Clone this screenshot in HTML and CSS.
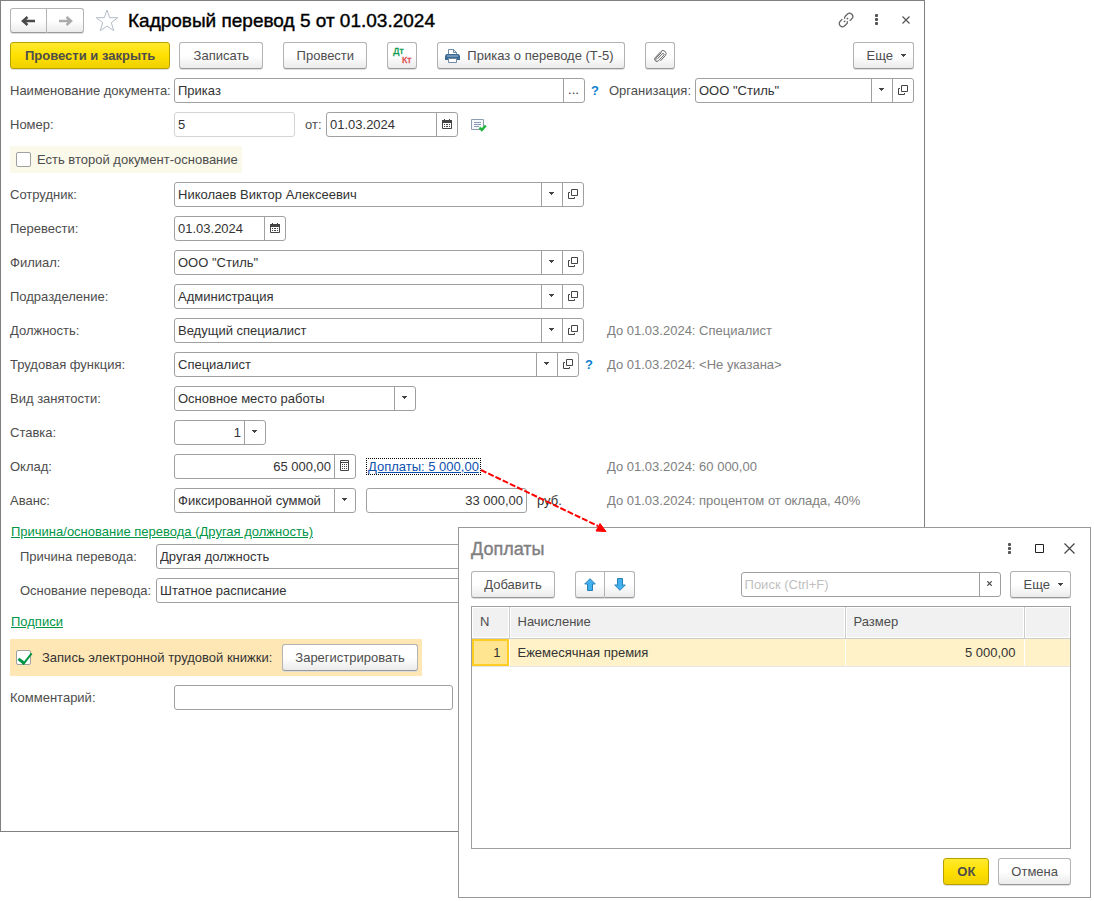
FILE: index.html
```html
<!DOCTYPE html>
<html lang="ru">
<head>
<meta charset="utf-8">
<title>Кадровый перевод 5 от 01.03.2024</title>
<link rel="stylesheet" href="styles.css">
</head>
<body>
<svg class="sprite" aria-hidden="true">
  <symbol id="i-open" viewBox="0 0 10 10"><path d="M3.5.5h6v6h-6zM2 3.500H.5v6h6V8" fill="none" stroke="#444"/></symbol>
  <symbol id="i-down" viewBox="0 0 5 3"><path d="M0 0h5v1H4v1H3v1H2V2H1V1H0z" fill="#444"/></symbol>
  <symbol id="i-cal" viewBox="0 0 10 10"><path d="M.5 2v7.500h9V2" fill="none" stroke="#444"/><path d="M0 1h2V0h1v1h4V0h1v1h2v3H0zM2 5h1v1H2zM4 5h2v1H4zM7 5h1v1H7zM2 7h1v1H2zM4 7h2v1H4zM7 7h1v1H7z" fill="#444"/></symbol>
  <symbol id="i-calc" viewBox="0 0 9 11"><path d="M.5.5h8v10h-8zM0 2.500h9" fill="none" stroke="#444"/><path d="M2 4h1v1H2zM4 4h1v1H4zM6 4h1v1H6zM2 6h1v1H2zM4 6h1v1H4zM6 6h1v1H6zM2 8h1v1H2zM4 8h1v1H4zM6 8h1v1H6z" fill="#444"/></symbol>
  <symbol id="i-dots" viewBox="0 0 3 11"><path d="M0 0h3v3H0zM0 4h3v3H0zM0 8h3v3H0z" fill="#777"/><path d="M1 0h1v3H1zM1 4h1v3H1zM1 8h1v3H1zM0 1h3v1H0zM0 5h3v1H0zM0 9h3v1H0z" fill="#555"/></symbol>
</svg>
<div class="scene">
  <main class="window">
    <header class="titlebar">
      <div class="btn-group">
        <button class="btn nav" aria-label="Назад"><svg width="15" height="12" viewBox="0 0 15 12"><path d="M14 6H3M6.500 2L2 6l4.500 4" fill="none" stroke="#4a4a4a" stroke-width="2.500"/></svg></button>
        <button class="btn nav" aria-label="Вперед"><svg width="15" height="12" viewBox="0 0 15 12"><path d="M1 6h11M8.500 2L13 6l-4.500 4" fill="none" stroke="#aaa" stroke-width="2.500"/></svg></button>
      </div>
      <button class="icon-btn star" aria-label="Избранное"><svg width="24" height="23" viewBox="0 0 24 23"><path d="M12 1l2.700 7.700h8.100l-6.500 5 2.400 8L12 17l-6.700 4.700 2.400-8-6.500-5h8.100z" fill="#fff" stroke="#b4bcc6"/></svg></button>
      <h1 class="title">Кадровый перевод 5 от 01.03.2024</h1>
      <div class="window-tools">
        <button class="icon-btn" aria-label="Ссылка"><svg width="16" height="16" viewBox="0 0 16 16"><g fill="none" stroke="#666" stroke-width="1.300" transform="rotate(-45 8 8)"><path d="M6 4.800H3a3.200 3.200 0 0 0 0 6.400h2.500q2 0 2.500-1.500M10 11.200h3a3.200 3.200 0 0 0 0-6.400h-2.500q-2 0-2.500 1.500M5 8h2M9 8h2"/></g></svg></button>
        <button class="icon-btn" aria-label="Меню"><svg width="3" height="11"><use href="#i-dots"/></svg></button>
        <button class="icon-btn" aria-label="Закрыть"><svg width="8" height="8" viewBox="0 0 8 8"><path d="M.5.5l7 7M7.500.5l-7 7" stroke="#555" stroke-width="1.200"/></svg></button>
      </div>
    </header>

    <div class="toolbar">
      <button class="btn primary submit">Провести и закрыть</button>
      <button class="btn std gap-s">Записать</button>
      <button class="btn std gap-l">Провести</button>
      <button class="btn square gap-l" aria-label="Дебет и кредит"><span class="dtkt"><span class="dt">Дт</span><span class="kt">Кт</span></span></button>
      <button class="btn print gap-l"><svg width="15" height="14" viewBox="0 0 15 14"><path d="M3.500 6V.5h5l3 3V6" fill="#fff" stroke="#6f8aa5"/><path d="M8.500.5v3h3" fill="none" stroke="#6f8aa5"/><path d="M1.500 5h12L15 6.500V11H0V6.500z" fill="#3d6a94"/><path d="M2 7h11" stroke="#9dbbd6"/><path d="M3.500 9.500h8v4h-8z" fill="#fff" stroke="#6f8aa5"/></svg><span>Приказ о переводе (Т-5)</span></button>
      <button class="btn square gap-l" aria-label="Вложения"><svg width="14" height="14" viewBox="0 0 14 14"><path d="M4.500 9.800l4.800-5a1 1 0 0 1 1.500 1.400l-5.300 5.500a2.200 2.200 0 0 1-3.300-3L7.800 2.600a3 3 0 0 1 4.500 4L7.500 11.800M3.300 11.200a1.500 1.500 0 0 1 0-2.300l5.200-5.400" fill="none" stroke="#666"/></svg></button>
      <button class="btn more">Еще<svg width="5" height="3"><use href="#i-down"/></svg></button>
    </div>

    <form class="form">
      <div class="row">
        <label class="label" for="docname">Наименование документа:</label>
        <div class="field w-name"><input id="docname" value="Приказ"><button type="button" aria-label="Выбрать">...</button></div>
        <a class="help" href="#">?</a>
        <label class="org-label" for="org">Организация:</label>
        <div class="field grow"><input id="org" value="ООО &quot;Стиль&quot;"><button type="button" aria-label="Список"><svg width="5" height="3"><use href="#i-down"/></svg></button><button type="button" aria-label="Открыть"><svg width="10" height="10"><use href="#i-open"/></svg></button></div>
      </div>
      <div class="row">
        <label class="label" for="num">Номер:</label>
        <div class="field w-num muted"><input id="num" value="5"></div>
        <label class="from" for="date">от:</label>
        <div class="field w-date"><input id="date" value="01.03.2024"><button type="button" aria-label="Календарь"><svg width="10" height="10"><use href="#i-cal"/></svg></button></div>
        <svg class="status" width="16" height="14" viewBox="0 0 16 14"><path d="M.5 1.500h12v10H.5z" fill="#f5f8fb" stroke="#8c9db3"/><path d="M3 4.500h7M3 6.500h7M3 8.500h5" stroke="#8c9db3"/><path d="M8.500 9.500l2.300 2.500 4-4.500" fill="none" stroke="#21b53a" stroke-width="2.500"/></svg>
      </div>
      <label class="check-line"><input class="check" type="checkbox"><span>Есть второй документ-основание</span></label>
      <div class="row">
        <label class="label" for="emp">Сотрудник:</label>
        <div class="field w-main"><input id="emp" value="Николаев Виктор Алексеевич"><button type="button" aria-label="Список"><svg width="5" height="3"><use href="#i-down"/></svg></button><button type="button" aria-label="Открыть"><svg width="10" height="10"><use href="#i-open"/></svg></button></div>
      </div>
      <div class="row">
        <label class="label" for="move">Перевести:</label>
        <div class="field w-move"><input id="move" value="01.03.2024"><button type="button" aria-label="Календарь"><svg width="10" height="10"><use href="#i-cal"/></svg></button></div>
      </div>
      <div class="row">
        <label class="label" for="branch">Филиал:</label>
        <div class="field w-main"><input id="branch" value="ООО &quot;Стиль&quot;"><button type="button" aria-label="Список"><svg width="5" height="3"><use href="#i-down"/></svg></button><button type="button" aria-label="Открыть"><svg width="10" height="10"><use href="#i-open"/></svg></button></div>
      </div>
      <div class="row">
        <label class="label" for="dep">Подразделение:</label>
        <div class="field w-main"><input id="dep" value="Администрация"><button type="button" aria-label="Список"><svg width="5" height="3"><use href="#i-down"/></svg></button><button type="button" aria-label="Открыть"><svg width="10" height="10"><use href="#i-open"/></svg></button></div>
      </div>
      <div class="row hinted">
        <label class="label" for="pos">Должность:</label>
        <div class="cell"><div class="field w-main"><input id="pos" value="Ведущий специалист"><button type="button" aria-label="Список"><svg width="5" height="3"><use href="#i-down"/></svg></button><button type="button" aria-label="Открыть"><svg width="10" height="10"><use href="#i-open"/></svg></button></div></div>
        <span class="hint">До 01.03.2024: Специалист</span>
      </div>
      <div class="row hinted">
        <label class="label" for="func">Трудовая функция:</label>
        <div class="cell"><div class="field w-func"><input id="func" value="Специалист"><button type="button" aria-label="Список"><svg width="5" height="3"><use href="#i-down"/></svg></button><button type="button" aria-label="Открыть"><svg width="10" height="10"><use href="#i-open"/></svg></button></div><a class="help" href="#">?</a></div>
        <span class="hint">До 01.03.2024: &lt;Не указана&gt;</span>
      </div>
      <div class="row">
        <label class="label" for="kind">Вид занятости:</label>
        <div class="field w-kind"><select id="kind"><option>Основное место работы</option></select><span class="drop"><svg width="5" height="3"><use href="#i-down"/></svg></span></div>
      </div>
      <div class="row">
        <label class="label" for="rate">Ставка:</label>
        <div class="field w-rate num"><input id="rate" value="1"><button type="button" aria-label="Список"><svg width="5" height="3"><use href="#i-down"/></svg></button></div>
      </div>
      <div class="row hinted">
        <label class="label" for="salary">Оклад:</label>
        <div class="cell pair"><div class="field w-pay num"><input id="salary" value="65 000,00"><button type="button" aria-label="Калькулятор"><svg width="9" height="11"><use href="#i-calc"/></svg></button></div><a class="extra" href="#">Доплаты: 5 000,00</a></div>
        <span class="hint">До 01.03.2024: 60 000,00</span>
      </div>
      <div class="row hinted">
        <label class="label" for="advance">Аванс:</label>
        <div class="cell pair"><div class="field w-pay"><select id="advance"><option>Фиксированной суммой</option></select><span class="drop"><svg width="5" height="3"><use href="#i-down"/></svg></span></div><div class="field w-sum num"><input aria-label="Сумма аванса" value="33 000,00"></div><span class="unit">руб.</span></div>
        <span class="hint">До 01.03.2024: процентом от оклада, 40%</span>
      </div>
      <section class="reason">
        <a class="section-link" href="#">Причина/основание перевода (Другая должность)</a>
        <div class="reason-rows">
          <div class="row">
            <label class="sub-label" for="why">Причина перевода:</label>
            <div class="field w-reason"><input id="why" value="Другая должность"></div>
          </div>
          <div class="row">
            <label class="sub-label" for="base">Основание перевода:</label>
            <div class="field w-reason"><input id="base" value="Штатное расписание"></div>
          </div>
        </div>
      </section>
      <a class="section-link" href="#">Подписи</a>
      <div class="record">
        <label class="record-label"><input class="check" type="checkbox" checked><span>Запись электронной трудовой книжки:</span></label>
        <button type="button" class="btn register">Зарегистрировать</button>
      </div>
      <div class="row">
        <label class="label" for="comment">Комментарий:</label>
        <div class="field w-comment"><input id="comment"></div>
      </div>
    </form>
  </main>

  <section class="dialog" role="dialog" aria-labelledby="dlg-title">
    <header class="dialog-head">
      <h2 class="dialog-title" id="dlg-title">Доплаты</h2>
      <div class="dialog-tools">
        <button class="icon-btn" aria-label="Меню"><svg width="3" height="11"><use href="#i-dots"/></svg></button>
        <button class="icon-btn" aria-label="Развернуть"><svg width="9" height="9" viewBox="0 0 9 9"><path d="M.5.5h8v8h-8z" fill="none" stroke="#222"/></svg></button>
        <button class="icon-btn" aria-label="Закрыть"><svg width="11" height="11" viewBox="0 0 11 11"><path d="M.5.5l10 10M10.500.5l-10 10" stroke="#444" stroke-width="1.200"/></svg></button>
      </div>
    </header>
    <div class="toolbar">
      <button class="btn std">Добавить</button>
      <div class="btn-group gap-l">
        <button class="btn square" aria-label="Вверх"><svg width="12" height="13" viewBox="0 0 12 13"><path d="M6 .7l5.300 5.300H8.500v6.500h-5V6H.7z" fill="#42b0ee" stroke="#2b7fb5"/></svg></button>
        <button class="btn square" aria-label="Вниз"><svg width="12" height="13" viewBox="0 0 12 13"><path d="M6 12.300L.7 7h2.800V.5h5V7h2.800z" fill="#42b0ee" stroke="#2b7fb5"/></svg></button>
      </div>
      <div class="field search"><input type="text" aria-label="Поиск" placeholder="Поиск (Ctrl+F)"><button type="button" aria-label="Очистить"><svg width="5" height="5" viewBox="0 0 5 5"><path d="M.3.3l4.400 4.400M4.700.3L.3 4.700" stroke="#444" stroke-width="1.200"/></svg></button></div>
      <button class="btn more">Еще<svg width="5" height="3"><use href="#i-down"/></svg></button>
    </div>
    <div class="table-box">
      <table class="table">
        <colgroup><col class="c-n"><col><col class="c-size"><col class="c-end"></colgroup>
        <thead><tr><th>N</th><th>Начисление</th><th>Размер</th><th></th></tr></thead>
        <tbody><tr><td class="current">1</td><td>Ежемесячная премия</td><td class="amount">5 000,00</td><td></td></tr></tbody>
      </table>
    </div>
    <footer class="dialog-foot">
      <button class="btn primary">ОК</button>
      <button class="btn">Отмена</button>
    </footer>
  </section>

  <svg class="pointer" width="130" height="68" viewBox="0 0 130 68" aria-hidden="true"><path d="M1 2L118 58" stroke="#f00" stroke-width="2" stroke-dasharray="6 2"/><path d="M120 55.500L126 63.500l-10-.5z" fill="#f00" stroke="#f00"/></svg>
</div>
</body>
</html>
```
FILE: styles.css
```css
* { box-sizing: border-box; }
body {
  margin: 0;
  background: #fff;
  color: #4d4d4d;
  font: 13px/16px "Liberation Sans", Arial, sans-serif;
}
button, input, select { font: inherit; color: inherit; margin: 0; }
svg { flex: none; display: block; }
.sprite { position: absolute; width: 0; height: 0; }

.scene { position: relative; min-height: 100vh; }
.window {
  margin-right: 169px;
  padding: 7px 10px 121px 9px;
  border: 1px solid #808080;
  background: #fff;
}

.titlebar { display: flex; align-items: center; height: 25px; margin-bottom: 9px; }
.title { margin: 0; color: #000; font-size: 19px; line-height: 24px; font-weight: 400; white-space: nowrap; -webkit-text-stroke: 0.4px #000; }
.icon-btn { display: flex; align-items: center; justify-content: center; padding: 0; border: 0; background: none; width: 30px; height: 24px; }
.star { margin: 0 6px 0 8px; }
.window-tools { display: flex; margin-left: auto; margin-right: -7px; padding-bottom: 2px; }

.btn {
  display: flex;
  align-items: center;
  justify-content: center;
  height: 27px;
  padding: 0 12px;
  border: 1px solid #b3b3b3;
  border-bottom-color: #999;
  border-radius: 3px;
  background: linear-gradient(#fff 50%, #ebebeb);
  box-shadow: 0 1px 0 #ddd;
  white-space: nowrap;
}
.btn.std { min-width: 84px; }
.btn.primary {
  min-width: 46px;
  border-color: #b8a000;
  background: linear-gradient(#ffea30, #ffe000 50%, #f0d000);
  font-weight: 700;
}
.btn.submit { padding: 0 14px; }
.btn-group { display: flex; }
.btn-group .btn:first-child { border-radius: 3px 0 0 3px; }
.btn-group .btn:last-child { border-radius: 0 3px 3px 0; border-left: 0; }
.btn.nav { width: 37px; height: 25px; padding: 0; }
.btn.square { width: 30px; padding: 0; }
.btn.print { gap: 7px; padding: 0 10px 0 7px; }
.btn.more { gap: 8px; padding: 0 7px 0 13px; margin-left: auto; }
.gap-s { margin-left: 9px; }
.gap-l { margin-left: 20px; }
.toolbar { display: flex; align-items: center; margin-bottom: 9px; }
.dtkt { display: flex; flex-direction: column; gap: 1px; width: 18px; font-size: 9px; line-height: 8px; -webkit-text-stroke: 0.3px; }
.dt { align-self: flex-start; color: #009646; }
.kt { align-self: flex-end; color: #e04040; }

.form { display: flex; flex-direction: column; align-items: stretch; gap: 9px; }
.row { display: flex; align-items: center; height: 25px; }
.label { flex: none; width: 164px; white-space: nowrap; }
.hinted { display: grid; grid-template-columns: 164px 433px 1fr; }
.cell { display: flex; align-items: center; }
.pair { gap: 10px; }
.hint { color: #808080; white-space: nowrap; }
.unit { color: #333; }

.field {
  display: flex;
  flex: none;
  height: 25px;
  border: 1px solid #a0a0a0;
  border-radius: 3px;
  background: #fff;
  color: #333;
}
.field input, .field select {
  flex: 1;
  min-width: 0;
  width: 0;
  padding: 0 3px;
  border: 0;
  outline: 0;
  background: none;
  appearance: none;
}
.field input::placeholder { color: #bfbfbf; }
.field button, .drop {
  display: flex;
  align-items: center;
  justify-content: center;
  flex: none;
  width: 21px;
  padding: 0 1px 2px 0;
  border: 0;
  border-left: 1px solid #a0a0a0;
  background: none;
}
.muted { border-color: #d4d4d4; }
.num input { text-align: right; }
.grow { flex: 1; }
.w-name { width: 411px; }
.w-num { width: 121px; }
.w-date { width: 132px; }
.w-main { width: 410px; }
.w-move { width: 112px; }
.w-func { width: 405px; }
.w-kind { width: 242px; }
.w-rate { width: 92px; }
.w-pay { width: 182px; }
.w-sum { width: 161px; }
.w-reason { width: 430px; }
.w-comment { width: 279px; }

.help { width: 20px; color: #0f7fd0; font-weight: 700; text-align: center; text-decoration: none; }
.org-label { width: 90px; padding-left: 4px; white-space: nowrap; }
.from { width: 31px; padding-left: 10px; }
.status { margin-left: 13px; }
.extra { padding: 0 1px; border: 1px dotted #000; color: #0d50b0; line-height: 15px; white-space: nowrap; }

.check-line {
  display: flex;
  align-items: center;
  align-self: flex-start;
  gap: 6px;
  height: 27px;
  padding: 0 4px 0 6px;
  background: #fbf9ea;
}
.check {
  appearance: none;
  flex: none;
  width: 15px;
  height: 15px;
  margin: 0;
  border: 1px solid #a0a0a0;
  border-radius: 2px;
  background: #fff;
}
.check:checked { position: relative; }
.check:checked::after {
  content: "";
  position: absolute;
  left: 4px;
  top: -1px;
  width: 6px;
  height: 11px;
  border: solid #009646;
  border-width: 0 2px 3px 0;
  transform: rotate(38deg);
}

.section-link { align-self: flex-start; display: block; height: 18px; padding-left: 1px; color: #009646; line-height: 20px; }
.reason-rows { display: grid; gap: 9px; margin-top: 4px; }
.sub-label { flex: none; width: 146px; padding-left: 10px; white-space: nowrap; }
.record {
  display: flex;
  align-items: center;
  align-self: flex-start;
  gap: 10px;
  height: 37px;
  padding: 0 4px 0 6px;
  background: #ffe7b5;
}
.record-label { display: flex; align-items: center; gap: 11px; color: #333; }

.dialog {
  position: absolute;
  left: 458px;
  right: 3px;
  top: 527px;
  padding: 9px 19px 12px 12px;
  border: 1px solid #999;
  background: #fff;
}
.dialog-head { display: flex; align-items: center; height: 24px; margin-bottom: 10px; }
.dialog-title { margin: 0; color: #808080; font-size: 18px; line-height: 24px; font-weight: 400; -webkit-text-stroke: 0.4px #808080; }
.dialog-tools { display: flex; margin-left: auto; margin-right: -13px; padding-bottom: 2px; }
.search { width: 260px; margin-left: auto; }
.dialog .toolbar { margin-bottom: 8px; }
.dialog .more { margin-left: 9px; }
.table-box { min-height: 243px; border: 1px solid #a0a0a0; }
.table { width: 100%; border-collapse: collapse; table-layout: fixed; }
.c-n { width: 37px; }
.c-size { width: 179px; }
.c-end { width: 46px; }
.table th {
  height: 31px;
  padding: 0 8px;
  border-right: 1px solid #ccc;
  border-bottom: 1px solid #ccc;
  background: #f1f1f1;
  box-shadow: inset 0 0 0 1px #fff;
  font-weight: 400;
  text-align: left;
}
.table td {
  height: 28px;
  padding: 1px 8px 0;
  border-right: 1px solid #fff;
  border-bottom: 1px solid #e6e6e6;
  background: #fff2c8;
  color: #333;
}
.table th:last-child, .table td:last-child { border-right: 0; }
.table .current { background: #ffe590; box-shadow: inset 0 0 0 2px #fc2; text-align: right; }
.table .amount { text-align: right; }
.dialog-foot { display: flex; justify-content: flex-end; gap: 9px; margin-top: 9px; }

.pointer { position: absolute; left: 480px; top: 468px; pointer-events: none; }
```
